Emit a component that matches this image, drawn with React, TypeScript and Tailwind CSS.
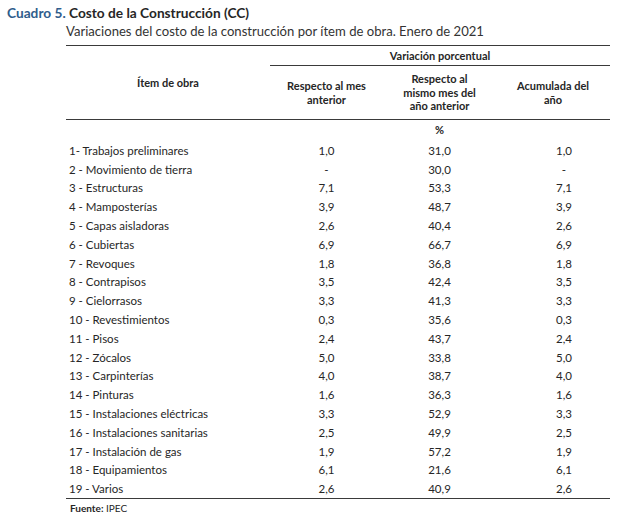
const rows: [string, string, string, string][] = [
  ['1- Trabajos preliminares', '1,0', '31,0', '1,0'],
  ['2 - Movimiento de tierra', '-', '30,0', '-'],
  ['3 - Estructuras', '7,1', '53,3', '7,1'],
  ['4 - Mamposterías', '3,9', '48,7', '3,9'],
  ['5 - Capas aisladoras', '2,6', '40,4', '2,6'],
  ['6 - Cubiertas', '6,9', '66,7', '6,9'],
  ['7 - Revoques', '1,8', '36,8', '1,8'],
  ['8 - Contrapisos', '3,5', '42,4', '3,5'],
  ['9 - Cielorrasos', '3,3', '41,3', '3,3'],
  ['10 - Revestimientos', '0,3', '35,6', '0,3'],
  ['11 - Pisos', '2,4', '43,7', '2,4'],
  ['12 - Zócalos', '5,0', '33,8', '5,0'],
  ['13 - Carpinterías', '4,0', '38,7', '4,0'],
  ['14 - Pinturas', '1,6', '36,3', '1,6'],
  ['15 - Instalaciones eléctricas', '3,3', '52,9', '3,3'],
  ['16 - Instalaciones sanitarias', '2,5', '49,9', '2,5'],
  ['17 - Instalación de gas', '1,9', '57,2', '1,9'],
  ['18 - Equipamientos', '6,1', '21,6', '6,1'],
  ['19 - Varios', '2,6', '40,9', '2,6'],
];

const cols = 'grid grid-cols-[204px_113px_113px_114px]';

export default function App() {
  return (
    <div className="w-[641px] h-[522px] bg-white text-[#262626] font-['Lato',sans-serif] overflow-hidden">
      {/* title */}
      <div className="pt-[4px] pl-[7px] text-[13.7px] leading-[17px] font-bold">
        <span className="text-[#2f5d8c]">Cuadro 5.</span> Costo de la Construcción (CC)
      </div>
      <div className="pl-[66px] text-[13.1px] leading-[20px] text-[#333]">
        Variaciones del costo de la construcción por ítem de obra. Enero de 2021
      </div>

      <div className="ml-[66px] mt-[4px] w-[544px] border-t-[1.5px] border-[#3a3a3a]">
        {/* header */}
        <div className={`${cols} grid-rows-[20px_53px] border-b-[1.5px] border-[#3a3a3a] text-[11px] font-bold leading-[13.5px]`}>
          <div className="row-span-2 flex items-center justify-center">Ítem de obra</div>
          <div className="col-span-3 flex items-center justify-center border-b-[1.5px] border-[#3a3a3a]">
            Variación porcentual
          </div>
          <div className="flex items-center justify-center text-center">
            Respecto al mes
            <br />
            anterior
          </div>
          <div className="flex items-center justify-center text-center">
            Respecto al
            <br />
            mismo mes del
            <br />
            año anterior
          </div>
          <div className="flex items-center justify-center text-center">
            Acumulada del
            <br />
            año
          </div>
        </div>

        <div className={`${cols} h-[21px] items-center text-[11px] font-bold`}>
          <div />
          <div />
          <div className="text-center">%</div>
          <div />
        </div>

        {/* body */}
        <div className="border-b-[1.5px] border-[#3a3a3a] text-[11.5px]">
          {rows.map(([name, a, b, c]) => (
            <div key={name} className={`${cols} h-[18.8px] items-center`}>
              <div className="pl-[3px] whitespace-nowrap">{name}</div>
              <div className="text-center">{a}</div>
              <div className="text-center">{b}</div>
              <div className="text-center pl-[22px]">{c}</div>
            </div>
          ))}
        </div>
      </div>

      <div className="pl-[70px] pt-[3px] text-[10px] leading-[13px]">
        <span className="font-bold">Fuente:</span> IPEC
      </div>
    </div>
  );
}
